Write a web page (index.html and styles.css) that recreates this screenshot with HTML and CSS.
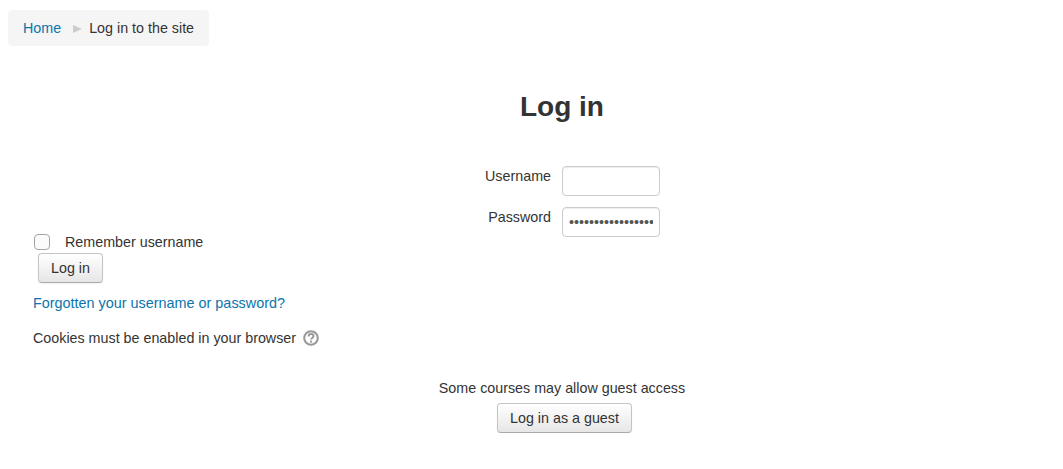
FILE: index.html
```html
<!DOCTYPE html>
<html lang="en">
<head>
<meta charset="utf-8">
<title>Log in to the site</title>
<link rel="stylesheet" href="styles.css">
</head>
<body>
  <nav class="breadcrumb">
    <a href="#">Home</a>
    <span class="divider"></span>
    <span class="current">Log in to the site</span>
  </nav>

  <section class="loginbox">
    <h2 class="title">Log in</h2>

    <form class="fields">
      <div class="row">
        <label class="row-label" for="username">Username</label>
        <input class="field" type="text" id="username">
      </div>
      <div class="row">
        <label class="row-label" for="password">Password</label>
        <input class="field" type="password" id="password" value="aaaaaaaaaaaaaaaaa">
      </div>
    </form>
  </section>

  <section class="extras">
    <div class="remember">
      <span class="checkbox"></span>
      <label>Remember username</label>
    </div>
    <button class="btn btn-login" type="button">Log in</button>
    <p class="forgot"><a href="#">Forgotten your username or password?</a></p>
    <p class="cookies">
      Cookies must be enabled in your browser
      <svg class="help" width="16" height="16" viewBox="0 0 16 16">
        <circle cx="8" cy="8" r="6.8" fill="none" stroke="#999" stroke-width="2.1"/>
        <path d="M5.6 6.4c0-1.5 1-2.4 2.5-2.4s2.4.9 2.4 2.1c0 1.9-2.4 1.8-2.4 3.5" fill="none" stroke="#999" stroke-width="2"/>
        <rect x="7.1" y="10.6" width="2" height="2" fill="#999"/>
      </svg>
    </p>
  </section>

  <section class="guest">
    <p class="guest-text">Some courses may allow guest access</p>
    <button class="btn btn-guest" type="button">Log in as a guest</button>
  </section>
</body>
</html>
```

FILE: styles.css
```css
* {
    box-sizing: border-box;
}
body {
    margin: 0;
    padding: 10px 8px 0;
    background: #fff;
    color: #333;
    font-family: "Liberation Sans", Arial, sans-serif;
    font-size: 14.3px;
    line-height: 20px;
}
a {
    color: #0a74ab;
    text-decoration: none;
}
p {
    margin: 0;
}

.breadcrumb {
    display: flex;
    align-items: center;
    width: 201px;
    height: 36px;
    padding: 0 15px;
    background: #f5f5f5;
    border-radius: 4px;
    white-space: nowrap;
}
.divider {
    flex: none;
    width: 0;
    height: 0;
    margin: 1px 7px 0 12px;
    border-left: 9px solid #ccc;
    border-top: 4px solid transparent;
    border-bottom: 4px solid transparent;
}

.loginbox {
    margin-left: 61px;
}
.title {
    margin: 41px 0 0;
    font-size: 28px;
    line-height: 40px;
    font-weight: bold;
    text-align: center;
    color: #333;
}
.fields {
    margin: 39px 11px 0 0;
}
.row {
    display: grid;
    grid-template-columns: 1fr 1fr;
    column-gap: 11px;
    margin-bottom: 11px;
}
.row-label {
    text-align: right;
    color: #333;
}
.field {
    width: 98px;
    height: 30px;
    padding: 4px 6px;
    border: 1px solid #ccc;
    border-radius: 4px;
    font-family: inherit;
    font-size: 14.3px;
    color: #555;
    background: #fff;
    box-shadow: inset 0 1px 1px rgba(0, 0, 0, 0.075);
}

.extras {
    margin-top: -16px;
    padding-left: 25px;
}
.remember {
    display: flex;
    align-items: center;
    height: 20px;
    margin-bottom: 1px;
    padding-left: 1px;
}
.checkbox {
    width: 16px;
    height: 16px;
    margin-top: -1px;
    margin-right: 15px;
    border: 1px solid #a6a6a6;
    border-radius: 4px;
    background: #fbfbfb;
}
.btn {
    display: block;
    height: 30px;
    padding: 0 12px;
    border: 1px solid #c4c4c4;
    border-bottom-color: #a9a9a9;
    border-radius: 4px;
    background: linear-gradient(#fff, #e6e6e6);
    box-shadow: inset 0 1px 0 rgba(255, 255, 255, 0.2), 0 1px 2px rgba(0, 0, 0, 0.05);
    color: #333;
    font-family: inherit;
    font-size: 14.3px;
    line-height: 20px;
}
.btn-login {
    margin: 0 0 0 5px;
    width: 65px;
}
.forgot {
    margin-top: 10px;
    font-size: 14.4px;
}
.cookies {
    margin-top: 15px;
    display: flex;
    align-items: center;
    gap: 7px;
}

.guest {
    margin: 30px 0 0 61px;
    text-align: center;
}
.btn-guest {
    display: inline-block;
    margin: 5px 0 0 5px;
    width: 135px;
}
```
